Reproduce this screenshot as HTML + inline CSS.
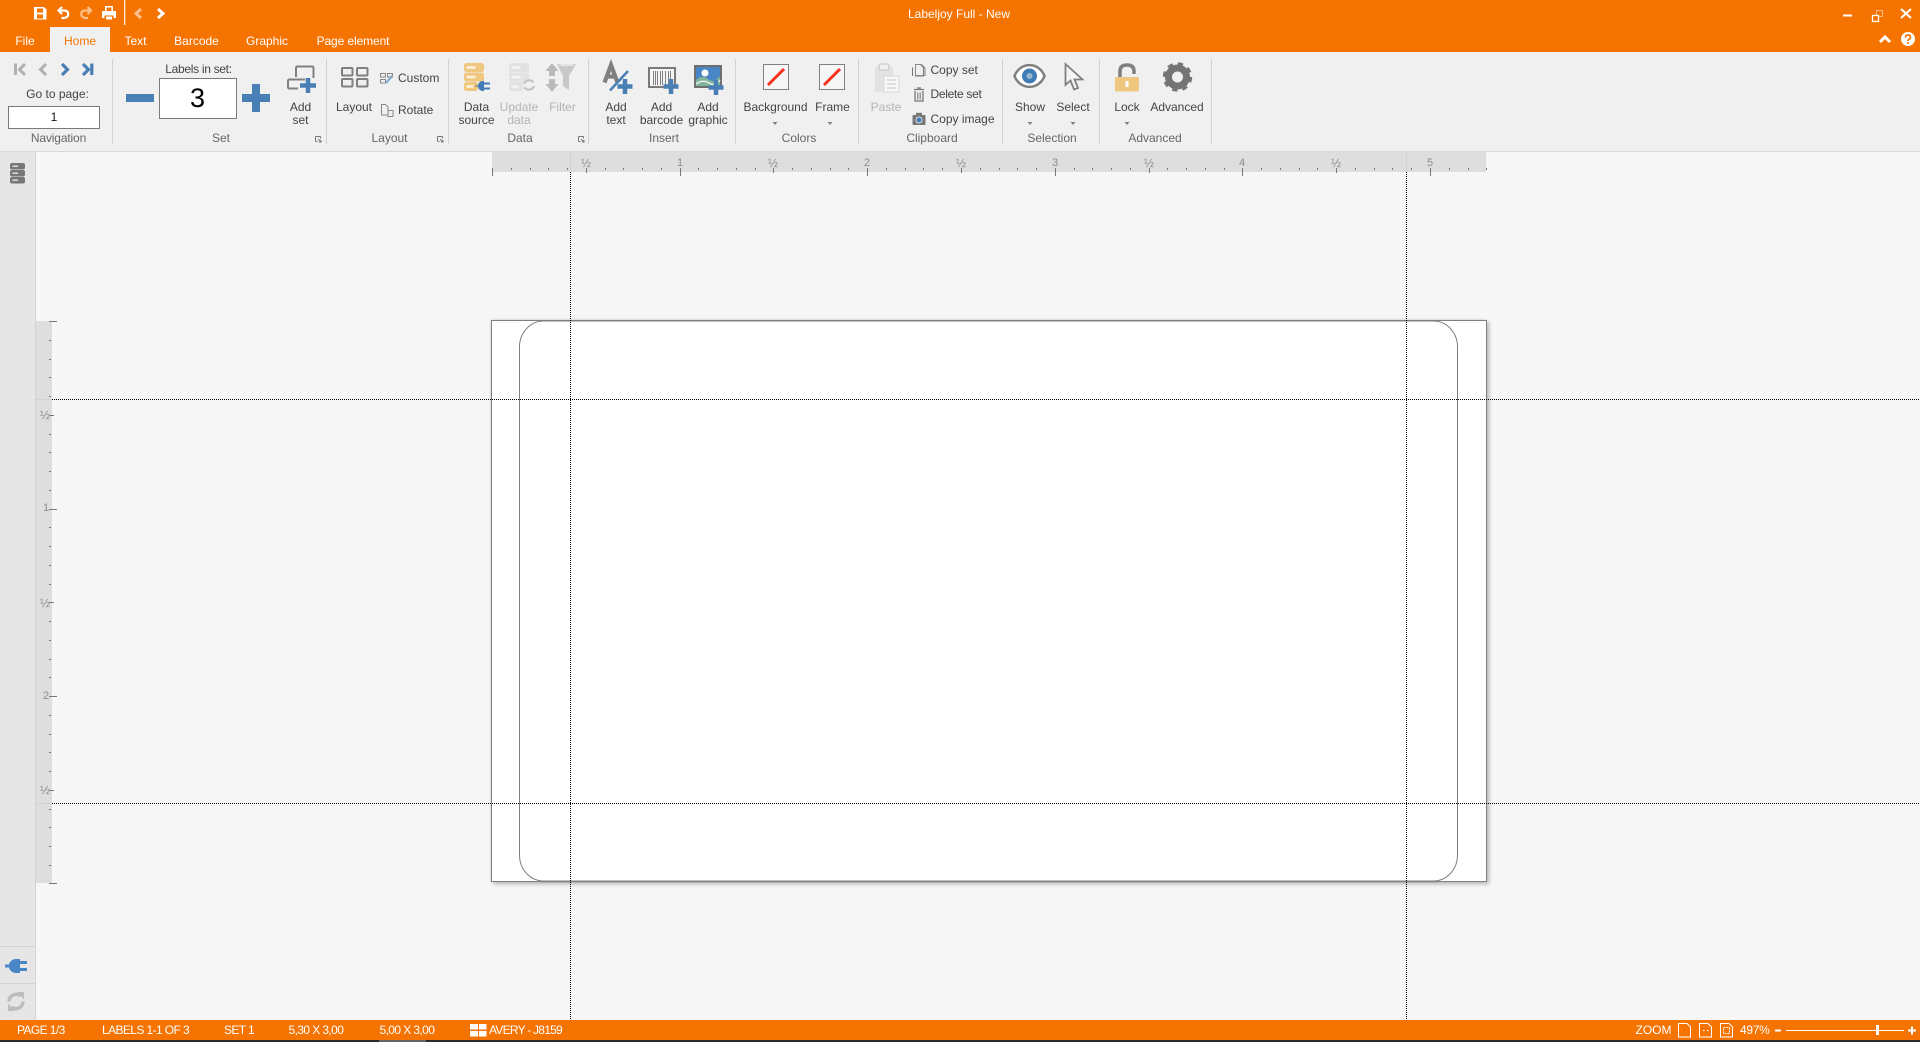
<!DOCTYPE html>
<html><head><meta charset="utf-8"><title>Labeljoy Full - New</title>
<style>
html,body{margin:0;padding:0;background:#f7f7f7}
body{position:relative;width:1920px;height:1042px;overflow:hidden;font:12px/14px "Liberation Sans",sans-serif;color:#444}
.b{position:absolute}
.t{position:absolute;white-space:nowrap;line-height:14px;height:14px}
.c{transform:translateX(-50%)}
.w{color:#fff}
.g{color:#666}
.d{color:#b4b4b4}
.r{color:#8c8c8c;font-size:11px}
.h{color:#8c8c8c;font-size:12px}
.s{letter-spacing:-.6px}
svg{position:absolute;left:0;top:0}
</style></head><body>
<div class="b" style="left:0;top:0;width:1920px;height:52px;background:#f57300"></div>
<div class="b" style="left:50px;top:27px;width:60px;height:25px;background:#f0f0f0"></div>
<div class="b" style="left:0;top:52px;width:1920px;height:99px;background:#f0f0f0"></div>
<div class="b" style="left:0;top:151px;width:1920px;height:1px;background:#d8d8d8"></div>
<div class="b" style="left:0;top:152px;width:35px;height:868px;background:#e6e6e6;border-right:1px solid #d4d4d4"></div>
<div class="b" style="left:36px;top:321px;width:16px;height:562px;background:#dedede"></div>
<div class="b" style="left:492px;top:152px;width:994px;height:20px;background:#dedede"></div>
<div class="b" style="left:491px;top:320px;width:994px;height:560px;background:#fff;border:1px solid #808080;box-shadow:2px 2px 4px rgba(0,0,0,.28),-1px -1px 2px rgba(0,0,0,.08)"></div>
<div class="b" style="left:0;top:1020px;width:1920px;height:20px;background:#f57300"></div>
<div class="b" style="left:0;top:1040px;width:1920px;height:2px;background:#2b2b2b"></div>
<div class="b" style="left:379px;top:1040px;width:47px;height:2px;background:#666"></div>

<svg width="1920" height="1042" viewBox="0 0 1920 1042" xmlns="http://www.w3.org/2000/svg" fill="none">
<!-- group separators -->
<path d="M112.5 59V144M326.5 59V144M448.5 59V144M588.5 59V144M735.5 59V144M858.5 59V144M1002.5 59V144M1099.5 59V144M1211.5 59V144" stroke="#d2d2d2"/>
<path d="M0 946.5H35M0 983.5H35" stroke="#d4d4d4"/>
<!-- dialog launchers -->
<g stroke="#777"><path d="M315.5 136.5h5M315.5 136.5v5M315.5 141.5h2M320.5 136.5v2"/><path d="M318 139l3 3m0-2v2h-2"/>
<path d="M437.5 136.5h5M437.5 136.5v5M437.5 141.5h2M442.5 136.5v2"/><path d="M440 139l3 3m0-2v2h-2"/>
<path d="M578.5 136.5h5M578.5 136.5v5M578.5 141.5h2M583.5 136.5v2"/><path d="M581 139l3 3m0-2v2h-2"/></g>
<!-- QAT -->
<g fill="#fff">
<path fill-rule="evenodd" d="M34 7h10l2.500 2.500V19.500H34ZM37 8.500v4h6v-4ZM37 14.500v4h6v-4Z"/>
<path fill-rule="evenodd" d="M105 6h8v5h3v7h-2.500v-2.500h-9V18H102v-7h3ZM106.500 7.500v3.500h5V7.500ZM106 16.500h6v3h-6Z"/>
<rect x="124" y="0" width="1.300" height="25" opacity=".85"/>
</g>
<path d="M62 7 58.500 10.500 62 14M58.500 10.500H64Q68.200 10.500 68.200 14T64 18H61.500" stroke="#fff" stroke-width="2.200"/>
<path d="M87.500 7 91 10.500 87.500 14M91 10.500H85.500Q81.300 10.500 81.300 14T85.500 18H88" stroke="#fff" stroke-opacity=".55" stroke-width="2.200"/>
<path d="M141 9 136 13.500 141 18" stroke="#fff" stroke-opacity=".55" stroke-width="3"/>
<path d="M158 9 163 13.500 158 18" stroke="#fff" stroke-width="3"/>
<!-- window controls -->
<path d="M1843 15.500H1852" stroke="#fff" stroke-width="2"/>
<rect x="1876.500" y="10.500" width="6" height="6" stroke="#fff" stroke-opacity=".5"/><rect x="1872.500" y="15.500" width="6" height="6" stroke="#fff" stroke-width="1.300" fill="#f57300"/>
<path d="M1901 9 1911 18M1911 9 1901 18" stroke="#fff" stroke-width="2"/>
<path d="M1880 42 1885 37 1890 42" stroke="#fff" stroke-width="3"/>
<circle cx="1908" cy="39" r="7" fill="#fff"/>
<path d="M1905.500 37.500q0-2.500 2.500-2.500t2.500 2.200q0 1.300-1.300 2t-1.200 1.800" stroke="#f57300" stroke-width="1.700"/><circle cx="1908" cy="43" r="1" fill="#f57300"/>
<!-- nav -->
<path d="M15.500 63.500V75M25 64 19.500 69.500 25 75" stroke="#b0b0b0" stroke-width="3"/>
<path d="M46 64 40.500 69.500 46 75" stroke="#b0b0b0" stroke-width="3"/>
<path d="M62 64 67.500 69.500 62 75" stroke="#4a7fb5" stroke-width="3.200"/>
<path d="M83 64 88.500 69.500 83 75M91.800 63.500V75" stroke="#4a7fb5" stroke-width="3.200"/>
<!-- inputs -->
<rect x="8.500" y="106.500" width="91" height="22" fill="#fff" stroke="#7a7a7a"/>
<rect x="159.500" y="78.500" width="77" height="40" fill="#fff" stroke="#7a7a7a"/>
<path d="M126 98H154M256 84V112M242 98H270" stroke="#4a7fb5" stroke-width="8"/>
<!-- add set -->
<path d="M296 77V68Q296 66.500 297.500 66.500H312Q313.500 66.500 313.500 68V78M288 87V81Q288 79.500 289.500 79.500H305M288 87Q288 88.500 289.500 88.500H298" stroke="#808080" stroke-width="2"/>
<path d="M308 78V93M300 85.500H316" stroke="#4a7fb5" stroke-width="4.500"/>
<!-- layout -->
<g stroke="#808080" stroke-width="2"><rect x="342" y="68" width="10.500" height="7.500" rx="1"/><rect x="357" y="68" width="10.500" height="7.500" rx="1"/><rect x="342" y="79" width="10.500" height="7.500" rx="1"/><rect x="357" y="79" width="10.500" height="7.500" rx="1"/></g>
<!-- custom / rotate small -->
<g stroke="#888"><rect x="380.500" y="73.500" width="5" height="3.500"/><rect x="387.500" y="73.500" width="5" height="3.500"/><rect x="380.500" y="79.500" width="5" height="3.500"/></g>
<path d="M386 83 392.500 75.500" stroke="#7aa6d0" stroke-width="2"/>
<path d="M381.500 104.500h4l2.500 2.500v8h-6.500ZM388.500 110.500h4.500v6h-6" stroke="#888"/>
<!-- data source -->
<g fill="#efc77e"><rect x="464" y="63" width="20" height="9" rx="2.500"/><rect x="464" y="72.500" width="20" height="9" rx="2.500"/><rect x="464" y="82" width="14" height="9" rx="2.500"/></g>
<path d="M466.500 67.500h9M466.500 77h9M466.500 86.500h7" stroke="#fbf3e2" stroke-width="2.500"/>
<path d="M475 85.500h3a5 5 0 0 1 4-4.500h2v10h-2a5 5 0 0 1-4-4.500h-3Z" fill="#3f7cb8"/><path d="M484 83.500H490M484 88.500H490" stroke="#3f7cb8" stroke-width="2"/>
<!-- update data -->
<g fill="#e2e2e2"><rect x="509" y="63" width="20" height="9" rx="2.500"/><rect x="509" y="72.500" width="20" height="9" rx="2.500"/><rect x="509" y="82" width="14" height="9" rx="2.500"/></g>
<path d="M511.500 67.500h9M511.500 77h9M511.500 86.500h7" stroke="#f5f5f5" stroke-width="2.500"/>
<path d="M524 84a5.500 5.500 0 0 1 9.500-1.500M534 86a5.500 5.500 0 0 1-9.500 1.500" stroke="#c4c4c4" stroke-width="2.200"/>
<!-- filter -->
<path d="M557 64H576L569 76V90L563 86V76Z" fill="#c8c8c8"/><ellipse cx="566.500" cy="65" rx="8" ry="1.300" fill="#e6e6e6"/>
<path d="M552 63 558.500 71H555V76H549V71H545.500ZM552 92 558.500 84H555V79H549V84H545.500Z" fill="#bababa"/>
<!-- add text -->
<path d="M604.500 82.500 611 65 617.500 82.500M607 76.500H615" stroke="#808080" stroke-width="4.200"/>
<path d="M610 90.500 628 71" stroke="#4a7fb5" stroke-width="2.500"/>
<path d="M625 79V94M617.500 86.500H632.500" stroke="#4a7fb5" stroke-width="4.500"/>
<!-- add barcode -->
<rect x="649" y="68" width="26" height="19" fill="#f6f6f6" stroke="#7a7a7a" stroke-width="2"/>
<path d="M653.500 71V85M655.500 71V85M657.500 71V85M660.500 71V85M662.500 71V85M665.500 71V85M668.500 71V85M670.500 71V80" stroke="#808080" shape-rendering="crispEdges"/>
<path d="M671 79V94M663.500 86.500H678.500" stroke="#4a7fb5" stroke-width="4.500"/>
<!-- add graphic -->
<rect x="695" y="66" width="26" height="21" stroke="#6e6e6e" stroke-width="2"/>
<rect x="696" y="67" width="24" height="19" fill="#4a85c5"/>
<path d="M696 86V80Q702 74 708 79T720 76V86Z" fill="#7fb39a"/>
<path d="M696 84Q703 79 709 83T720 80" stroke="#e8eee8" stroke-width="1.500"/>
<circle cx="705" cy="73" r="3.500" fill="#fff"/>
<path d="M716 80V95M708.500 87.500H723.500" stroke="#4a7fb5" stroke-width="4.500"/>
<!-- colors -->
<rect x="763.500" y="64.500" width="25" height="25" fill="#f6f6f6" stroke="#808080"/>
<path d="M768 85 784 69" stroke="#f2331d" stroke-width="3"/>
<rect x="819.500" y="64.500" width="25" height="25" fill="#f6f6f6" stroke="#808080"/>
<path d="M824 85 840 69" stroke="#f2331d" stroke-width="3"/>
<!-- paste -->
<rect x="875" y="66" width="18" height="26" rx="2" fill="#e2e2e2"/>
<rect x="879" y="64" width="10" height="6" rx="1.500" fill="#f0f0f0" stroke="#cfcfcf" stroke-width="1.500"/>
<rect x="884" y="76" width="15" height="16" fill="#f7f7f7" stroke="#d8d8d8"/>
<path d="M887 80h9M887 84h9M887 88h9" stroke="#d0d0d0" stroke-width="1.300"/>
<!-- clipboard small -->
<path d="M915.500 64.500h5l3 3v8.500h-8ZM912.500 67.500v8.500" stroke="#777"/><path d="M915.500 64.500h6l3.500 3.500v7.500h-9.500Z" stroke="#888"/>
<path d="M914 89.500h10M917 88h4M915 91v10h8V91" stroke="#777" stroke-width="1.300"/><path d="M917.500 92.500v7M919 92.500v7M920.500 92.500v7" stroke="#999"/>
<rect x="912.500" y="115" width="13" height="10" rx="1" fill="#777"/><rect x="916" y="112.800" width="6" height="3" fill="#777"/><circle cx="919" cy="120" r="3" fill="#3f7cb8" stroke="#e0e0e0"/>
<!-- show -->
<path d="M1014.500 76C1020 61.500 1039 61.500 1044.500 76C1039 90.500 1020 90.500 1014.500 76Z" fill="#fff" stroke="#808080" stroke-width="2.500"/>
<circle cx="1029.500" cy="76" r="7.500" fill="#3f7cb8"/><circle cx="1029.500" cy="76" r="3" fill="#9ab5d0"/>
<!-- select -->
<path d="M1065.500 64V85L1070.500 80.500 1074 89.500 1078 88 1074.500 79.500H1082.500Z" fill="#f4f4f4" stroke="#808080" stroke-width="1.800"/>
<!-- lock -->
<path d="M1120 78V71Q1120 65 1127 65T1134 71V74" stroke="#808080" stroke-width="3.500"/>
<rect x="1115" y="77" width="24" height="14.500" rx="1.500" fill="#efc77e"/><rect x="1125.500" y="81" width="3" height="6" fill="#fff"/>
<!-- gear -->
<circle cx="1177.500" cy="77" r="9" stroke="#747474" stroke-width="7"/>
<circle cx="1177.500" cy="77" r="13" stroke="#747474" stroke-width="3.500" stroke-dasharray="5.200 5"/>
<!-- dropdown arrows -->
<path d="M772.500 122h5l-2.500 3ZM827.500 122h5l-2.500 3ZM1027.500 122h5l-2.500 3ZM1070.500 122h5l-2.500 3ZM1124.500 122h5l-2.500 3Z" fill="#808080"/>
<!-- sidebar icons -->
<g fill="#777"><rect x="10" y="163" width="15" height="6.500" rx="2"/><rect x="10" y="170" width="15" height="6.500" rx="2"/><rect x="10" y="177" width="15" height="6.500" rx="2"/></g>
<path d="M12.500 166.200h5.500M12.500 173.200h5.500M12.500 180.200h5.500" stroke="#e6e6e6" stroke-width="1.400"/>
<path d="M5 964.500h4a7 7 0 0 1 7-5.500h4v14h-4a7 7 0 0 1-7-5.500H5Z" fill="#4a85c5"/><path d="M20 962.500H27M20 969.500H27" stroke="#4a85c5" stroke-width="3"/>
<path d="M9 1001.500a7 7 0 0 1 11.500-5.500M23 1001.500a7 7 0 0 1-11.500 5.500" stroke="#bdbdbd" stroke-width="3.500"/><path d="M17 992h7v7.500ZM15 1011H8v-7.500Z" fill="#bdbdbd"/>
<!-- h ruler -->
<g stroke="#777" shape-rendering="crispEdges">
<path d="M511.500 168v2M530.500 168v2M548.500 168v2M567.500 168v2M605.500 168v2M623.500 168v2M642.500 168v2M661.500 168v2M698.500 168v2M717.500 168v2M736.500 168v2M755.500 168v2M792.500 168v2M811.500 168v2M830.500 168v2M848.500 168v2M886.500 168v2M905.500 168v2M923.500 168v2M942.500 168v2M980.500 168v2M999.500 168v2M1017.500 168v2M1036.500 168v2M1074.500 168v2M1092.500 168v2M1111.500 168v2M1130.500 168v2M1167.500 168v2M1186.500 168v2M1205.500 168v2M1224.500 168v2M1261.500 168v2M1280.500 168v2M1299.500 168v2M1317.500 168v2M1355.500 168v2M1374.500 168v2M1392.500 168v2M1411.500 168v2M1449.500 168v2M1468.500 168v2M1486.500 168v2"/>
<path d="M586.500 168v5M773.500 168v5M961.500 168v5M1149.500 168v5M1336.500 168v5"/>
<path d="M492.500 168v8M680.500 168v8M867.500 168v8M1055.500 168v8M1242.500 168v8M1430.500 168v8"/>
<!-- v ruler -->
<path d="M49 340.500h2M49 359.500h2M49 377.500h2M49 396.500h2M49 434.500h2M49 452.500h2M49 471.500h2M49 490.500h2M49 527.500h2M49 546.500h2M49 565.500h2M49 584.500h2M49 621.500h2M49 640.500h2M49 659.500h2M49 677.500h2M49 715.500h2M49 734.500h2M49 752.500h2M49 771.500h2M49 809.500h2M49 827.500h2M49 846.500h2M49 865.500h2"/>
<path d="M49 415.500h5M49 602.500h5M49 790.500h5"/>
<path d="M49 321.500h8M49 509.500h8M49 696.500h8M49 883.500h8"/>
</g>
<!-- inner rounded outline -->
<path d="M519.500 855V347A24 26 0 0 1 543.500 321H1433.500A24 26 0 0 1 1457.500 347V855A24 26 0 0 1 1433.500 881H543.500A24 26 0 0 1 519.500 855Z" stroke="#808080"/>
<path d="M541 881.500H1437" stroke="#808080" stroke-width="1.500"/>
<!-- guides -->
<g stroke="#000" stroke-dasharray="1 1" shape-rendering="crispEdges">
<path d="M570.500 172V1020M1406.500 172V1020M52 399.500H1920M52 803.500H1920"/>
</g>
<g stroke="#c8c8c8" stroke-dasharray="1 1" shape-rendering="crispEdges"><path d="M570.500 152V172M1406.500 152V172M36 399.500H52M36 803.500H52"/></g>
<!-- status icons -->
<g fill="#fff"><rect x="470" y="1024" width="8" height="5.500"/><rect x="479" y="1024" width="7.500" height="5.500"/><rect x="470" y="1031" width="8" height="5.500"/><rect x="479" y="1031" width="7.500" height="5.500"/></g>
<g stroke="#fff"><path d="M1678.500 1023.500h8.500l3.500 3.500v10h-12Z"/><path d="M1699.500 1023.500h8.500l3.500 3.500v10h-12Z"/><path d="M1703 1030.500h1.500M1707 1030.500h1.500"/><path d="M1720.500 1023.500h8.500l3.500 3.500v10h-12Z"/><rect x="1723.500" y="1027.500" width="6" height="6" stroke-dasharray="2 1"/></g>
<path d="M1775 1030.500h6M1908 1030.500h8M1912 1026.500v8" stroke="#fff" stroke-width="2"/>
<path d="M1786 1030.500H1904" stroke="#fff"/><rect x="1876" y="1025" width="3" height="10" fill="#fff"/>
</svg>

<!-- tabs/title -->
<div class="t c w" style="left:959px;top:7px">Labeljoy Full - New</div>
<div class="t c w" style="left:25px;top:34px">File</div>
<div class="t c" style="left:80px;top:34px;color:#f57300">Home</div>
<div class="t c w" style="left:135.500px;top:34px">Text</div>
<div class="t c w" style="left:196.500px;top:34px">Barcode</div>
<div class="t c w" style="left:267px;top:34px">Graphic</div>
<div class="t c w" style="left:353px;top:34px;letter-spacing:-.1px">Page element</div>
<!-- group labels -->
<div class="t c g" style="left:58.500px;top:131px;letter-spacing:-.15px">Navigation</div>
<div class="t c g" style="left:221px;top:131px">Set</div>
<div class="t c g" style="left:389.500px;top:131px">Layout</div>
<div class="t c g" style="left:520px;top:131px">Data</div>
<div class="t c g" style="left:664px;top:131px">Insert</div>
<div class="t c g" style="left:799px;top:131px">Colors</div>
<div class="t c g" style="left:932px;top:131px">Clipboard</div>
<div class="t c g" style="left:1052px;top:131px">Selection</div>
<div class="t c g" style="left:1155px;top:131px">Advanced</div>
<!-- ribbon text -->
<div class="t c" style="left:57.500px;top:87px">Go to page:</div>
<div class="t c" style="left:54px;top:110px;color:#111">1</div>
<div class="t c" style="left:198.500px;top:62px;letter-spacing:-.3px">Labels in set:</div>
<div class="t c" style="left:197.500px;top:83px;font-size:27px;line-height:30px;height:30px;color:#000">3</div>
<div class="t c" style="left:300.500px;top:100px">Add</div>
<div class="t c" style="left:300.500px;top:113px">set</div>
<div class="t c" style="left:354px;top:100px">Layout</div>
<div class="t" style="left:398px;top:71px">Custom</div>
<div class="t" style="left:398px;top:103px">Rotate</div>
<div class="t c" style="left:476.500px;top:100px">Data</div>
<div class="t c" style="left:476.500px;top:113px">source</div>
<div class="t c d" style="left:519px;top:100px">Update</div>
<div class="t c d" style="left:519px;top:113px">data</div>
<div class="t c d" style="left:562.500px;top:100px">Filter</div>
<div class="t c" style="left:616px;top:100px">Add</div>
<div class="t c" style="left:616px;top:113px">text</div>
<div class="t c" style="left:661.500px;top:100px">Add</div>
<div class="t c" style="left:661.500px;top:113px">barcode</div>
<div class="t c" style="left:708px;top:100px">Add</div>
<div class="t c" style="left:708px;top:113px">graphic</div>
<div class="t c" style="left:775.500px;top:100px">Background</div>
<div class="t c" style="left:832.500px;top:100px">Frame</div>
<div class="t c d" style="left:886px;top:100px">Paste</div>
<div class="t" style="left:930.500px;top:63px">Copy set</div>
<div class="t" style="left:930.500px;top:87px;letter-spacing:-.3px">Delete set</div>
<div class="t" style="left:930.500px;top:112px">Copy image</div>
<div class="t c" style="left:1030px;top:100px">Show</div>
<div class="t c" style="left:1073px;top:100px">Select</div>
<div class="t c" style="left:1127px;top:100px">Lock</div>
<div class="t c" style="left:1177px;top:100px">Advanced</div>
<!-- rulers text -->
<div class="t c h" style="left:586px;top:156px">½</div>
<div class="t c r" style="left:680px;top:156px">1</div>
<div class="t c h" style="left:773px;top:156px">½</div>
<div class="t c r" style="left:867px;top:156px">2</div>
<div class="t c h" style="left:961px;top:156px">½</div>
<div class="t c r" style="left:1055px;top:156px">3</div>
<div class="t c h" style="left:1149px;top:156px">½</div>
<div class="t c r" style="left:1242px;top:156px">4</div>
<div class="t c h" style="left:1336px;top:156px">½</div>
<div class="t c r" style="left:1430px;top:156px">5</div>
<div class="t c h" style="left:45px;top:408px">½</div>
<div class="t c r" style="left:46px;top:501px">1</div>
<div class="t c h" style="left:45px;top:596px">½</div>
<div class="t c r" style="left:46px;top:689px">2</div>
<div class="t c h" style="left:45px;top:783px">½</div>
<!-- status text -->
<div class="t w s" style="left:17px;top:1023px">PAGE 1/3</div>
<div class="t w s" style="left:102px;top:1023px">LABELS 1-1 OF 3</div>
<div class="t w s" style="left:224px;top:1023px">SET 1</div>
<div class="t w s" style="left:288.500px;top:1023px">5,30 X 3,00</div>
<div class="t w s" style="left:379.500px;top:1023px">5,00 X 3,00</div>
<div class="t w" style="left:489px;top:1023px;letter-spacing:-.75px">AVERY - J8159</div>
<div class="t w" style="left:1635.500px;top:1023px">ZOOM</div>
<div class="t w" style="left:1740px;top:1023px;letter-spacing:-.3px">497%</div>
</body></html>
